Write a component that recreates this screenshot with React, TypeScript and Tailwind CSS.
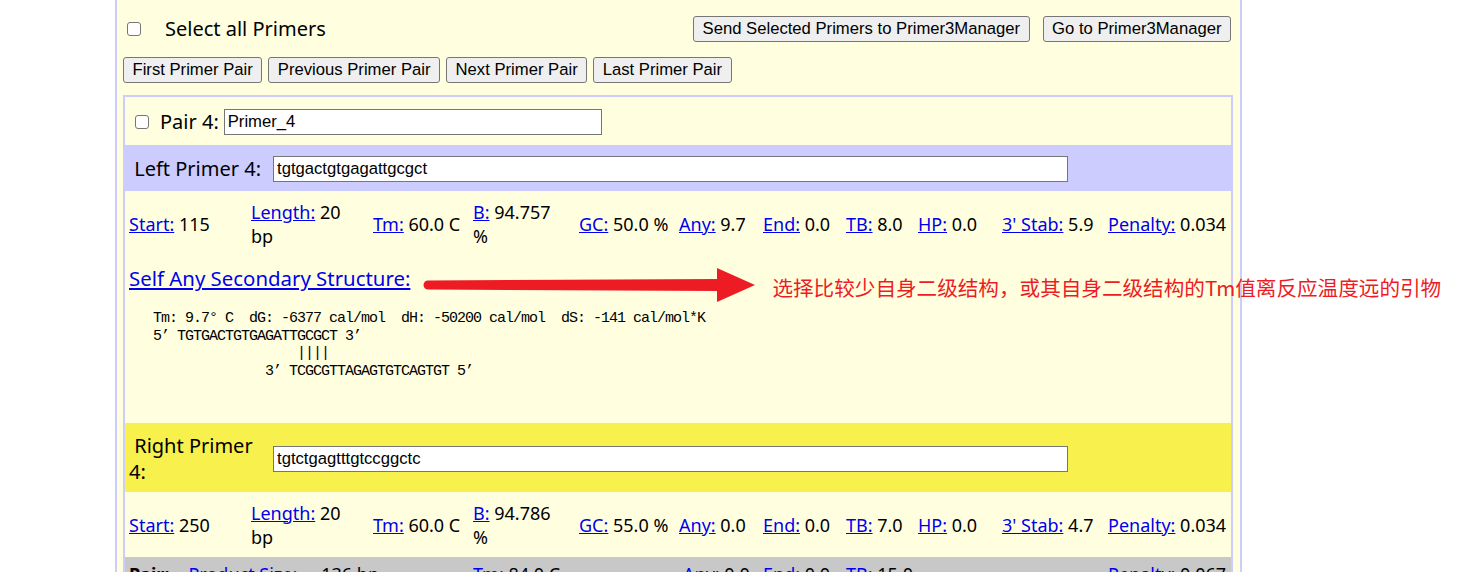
import React from "react";

const LINK = "text-[#0000ee] underline";
const BTN =
  "h-[26px] whitespace-nowrap rounded-[3px] border border-[#767676] bg-[#efefef] px-[8.5px] font-['Liberation_Sans',Arial,sans-serif] text-[16.67px] leading-none text-black";
const INPUT =
  "h-[26px] border border-[#767676] bg-white px-[3px] font-['Liberation_Sans',Arial,sans-serif] text-[16.67px] text-black outline-none";

function Check({ className = "" }: { className?: string }) {
  return (
    <span
      className={
        "inline-block h-[14px] w-[14px] shrink-0 rounded-[3px] border border-[#767676] bg-white " +
        className
      }
    />
  );
}

type Stat = { l: string; v: React.ReactNode };

function StatsRow({ items, h }: { items: Stat[]; h: string }) {
  return (
    <div
      className={
        "grid grid-cols-[122px_122px_100px_106px_100px_84px_83px_72px_84px_106px_1fr] items-center pl-[4px] text-[18px] leading-[24px] " +
        h
      }
    >
      {items.map((s, i) => (
        <div key={i} className="whitespace-nowrap">
          <span className={LINK}>{s.l}</span> {s.v}
        </div>
      ))}
    </div>
  );
}

const leftStats: Stat[] = [
  { l: "Start:", v: "115" },
  {
    l: "Length:",
    v: (
      <>
        20
        <br />
        bp
      </>
    ),
  },
  { l: "Tm:", v: "60.0 C" },
  {
    l: "B:",
    v: (
      <>
        94.757
        <br />%
      </>
    ),
  },
  { l: "GC:", v: "50.0 %" },
  { l: "Any:", v: "9.7" },
  { l: "End:", v: "0.0" },
  { l: "TB:", v: "8.0" },
  { l: "HP:", v: "0.0" },
  { l: "3' Stab:", v: "5.9" },
  { l: "Penalty:", v: "0.034" },
];

const rightStats: Stat[] = [
  { l: "Start:", v: "250" },
  {
    l: "Length:",
    v: (
      <>
        20
        <br />
        bp
      </>
    ),
  },
  { l: "Tm:", v: "60.0 C" },
  {
    l: "B:",
    v: (
      <>
        94.786
        <br />%
      </>
    ),
  },
  { l: "GC:", v: "55.0 %" },
  { l: "Any:", v: "0.0" },
  { l: "End:", v: "0.0" },
  { l: "TB:", v: "7.0" },
  { l: "HP:", v: "0.0" },
  { l: "3' Stab:", v: "4.7" },
  { l: "Penalty:", v: "0.034" },
];

const PRE = [
  "Tm: 9.7\u00b0 C  dG: -6377 cal/mol  dH: -50200 cal/mol  dS: -141 cal/mol*K",
  "5\u2019 TGTGACTGTGAGATTGCGCT 3\u2019",
  "                  ||||",
  "              3\u2019 TCGCGTTAGAGTGTCAGTGT 5\u2019",
].join("\n");

export default function App() {
  return (
    <div className="h-[572px] w-full overflow-hidden bg-white font-['Noto_Sans','Open_Sans','Noto_Sans_CJK_SC',sans-serif] text-black">
      <div className="ml-[115px] w-[1127px] border-x-2 border-[#ccccff] bg-[#ffffe0] pb-[20px] pl-[6px] pr-[7px] pt-[16px]">
        {/* row 1 */}
        <div className="flex h-[26px] items-center justify-between">
          <div className="flex items-center">
            <Check className="ml-[4px]" />
            <span className="ml-[24px] text-[20px] leading-[26px]">Select all Primers</span>
          </div>
          <div className="flex gap-[13px] pr-[2px]">
            <button className={BTN}>Send Selected Primers to Primer3Manager</button>
            <button className={BTN}>Go to Primer3Manager</button>
          </div>
        </div>
        {/* row 2 */}
        <div className="mt-[15px] flex gap-[6px]">
          <button className={BTN}>First Primer Pair</button>
          <button className={BTN}>Previous Primer Pair</button>
          <button className={BTN}>Next Primer Pair</button>
          <button className={BTN}>Last Primer Pair</button>
        </div>
        {/* inner box */}
        <div className="mt-[12px] border-2 border-[#ccccff]">
          <div className="flex h-[48px] items-center pl-[10px] pt-[2px]">
            <Check />
            <span className="ml-[11px] text-[20px]">Pair 4:</span>
            <input className={INPUT + " ml-[5px] w-[378px]"} defaultValue="Primer_4" readOnly />
          </div>
          <div className="flex h-[46px] items-center bg-[#ccccff] pt-[2px]">
            <div className="w-[148px] pl-[4px] text-[20px] leading-[26px]">{"\u00a0"}Left Primer 4:</div>
            <input className={INPUT + " w-[795px]"} defaultValue="tgtgactgtgagattgcgct" readOnly />
          </div>
          <StatsRow items={leftStats} h="h-[66px]" />
          <div className="h-[166px] px-[4px] pt-[8px]">
            <div className="flex items-start whitespace-nowrap">
              <span className={LINK + " text-[20.4px] leading-[27px]"}>Self Any Secondary Structure:</span>
              <svg className="ml-[12px] mt-[3px] shrink-0" width="333" height="34" viewBox="0 0 333 34">
                <path d="M6 12.5 L298 11 L298 23 L6 21.5 A4.5 4.5 0 0 1 6 12.5 Z" fill="#ed1c24" />
                <polygon points="295,0 333,17 295,34" fill="#ed1c24" />
              </svg>
              <span className="ml-[17px] mt-[8px] font-['Noto_Sans_CJK_SC',sans-serif] text-[20.6px] leading-[28px] text-[#ed1c24]">
                选择比较少自身二级结构，或其自身二级结构的Tm值离反应温度远的引物
              </span>
            </div>
            <pre className="ml-[24px] mt-[8px] font-['Liberation_Mono','Courier_New',monospace] text-[15px] leading-[17.67px] tracking-[-1px]">
              {PRE}
            </pre>
          </div>
          <div className="flex h-[69px] items-center bg-[#f8f04c] pt-[2px]">
            <div className="w-[148px] pl-[4px] text-[20px] leading-[26px]">
              {"\u00a0"}Right Primer
              <br />
              4:
            </div>
            <input className={INPUT + " w-[795px]"} defaultValue="tgtctgagtttgtccggctc" readOnly />
          </div>
          <StatsRow items={rightStats} h="h-[65px]" />
          <div className="grid h-[40px] grid-cols-[122px_122px_100px_106px_100px_84px_83px_72px_84px_106px_1fr] items-start bg-[#c8c8c8] pl-[4px] pt-[5px] text-[18px] leading-[24px]">
            <div className="col-span-3 whitespace-nowrap">
              <b>Pair:</b>
              <span className={LINK + " ml-[19px]"}>Product Size:</span>
              <span className="ml-[24px]">136 bp</span>
            </div>
            <div className="whitespace-nowrap">
              <span className={LINK}>Tm:</span> 84.0 C
            </div>
            <div />
            <div className="whitespace-nowrap pl-[4px]">
              <span className={LINK}>Any:</span> 0.0
            </div>
            <div className="whitespace-nowrap">
              <span className={LINK}>End:</span> 0.0
            </div>
            <div className="whitespace-nowrap">
              <span className={LINK}>TB:</span> 15.0
            </div>
            <div />
            <div />
            <div className="whitespace-nowrap">
              <span className={LINK}>Penalty:</span> 0.067
            </div>
          </div>
        </div>
      </div>
    </div>
  );
}
